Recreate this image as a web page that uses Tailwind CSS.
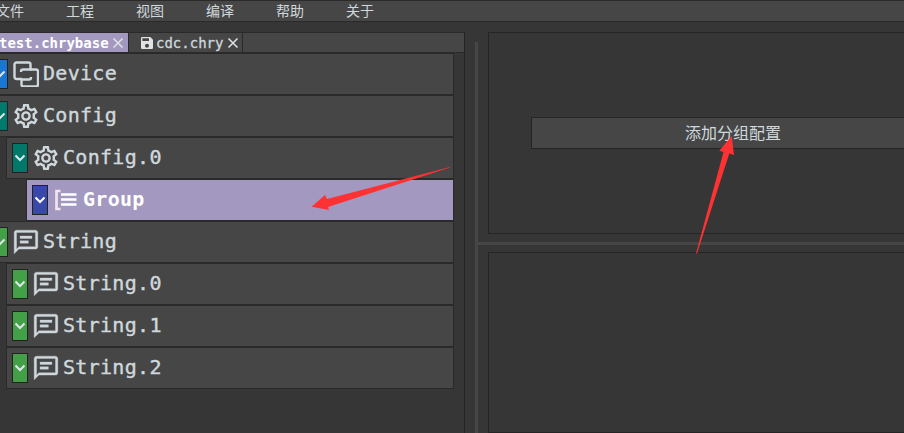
<!DOCTYPE html>
<html lang="zh-CN">
<head>
    <meta charset="UTF-8">
    <title>ChryUSB Configurator</title>
    <script src="https://cdn.jsdelivr.net/npm/@tailwindcss/browser@4"></script>
</head>
<body class="relative w-[904px] h-[433px] overflow-hidden bg-[#363636] text-[#cfd8dc] font-['Noto_Sans_CJK_SC','Liberation_Sans',sans-serif]">

    <!-- menu bar -->
    <nav class="h-[22px] flex items-center gap-[42px] pb-[2px] -ml-[2px] pl-0 bg-[#464646] border-y border-[#2a2a2a] text-[14px] leading-none w-[910px]">
        <span class="-ml-[2px]">文件</span>
        <span>工程</span>
        <span>视图</span>
        <span>编译</span>
        <span>帮助</span>
        <span>关于</span>
    </nav>

    <div class="flex pt-[10px] h-[411px]">
        <!-- left: tabs and tree -->
        <div class="w-[465px] h-full shrink-0 border-r border-[#252525] overflow-hidden">
            <div class="h-[21px] flex bg-[#464646] border-t border-b border-[#2a2a2a] font-['DejaVu_Sans_Mono',monospace] text-[14px] leading-none">
                <div class="w-[129px] shrink-0 flex items-center justify-between pr-[4px] bg-[#a399c0] border-r border-[#2a2a2a]">
                    <span class="-ml-[1px] font-bold text-white">test.chrybase</span>
                    <svg class="w-[12px] h-[12px]" viewBox="0 0 12 12" fill="none" stroke="#dfe3e6" stroke-width="1.5"><path d="M1.5 1.5l9 9M10.5 1.5l-9 9"/></svg>
                </div>
                <div class="w-[114px] shrink-0 flex items-center pl-[12px] gap-[3px] border-r border-[#2a2a2a]">
                    <svg class="w-[12px] h-[12px] shrink-0" viewBox="3 3 18 18" fill="#dfe3e6"><path d="M17 3H5c-1.1 0-2 .9-2 2v14c0 1.1.9 2 2 2h14c1.1 0 2-.9 2-2V7l-4-4zm-5 16c-1.66 0-3-1.34-3-3s1.34-3 3-3 3 1.34 3 3-1.34 3-3 3zm3-10H5V5h10v4z"/></svg>
                    <span class="[-webkit-text-stroke:0.3px_currentColor]">cdc.chry</span>
                    <svg class="w-[12px] h-[12px] ml-[1px]" viewBox="0 0 12 12" fill="none" stroke="#dfe3e6" stroke-width="1.5"><path d="M1.5 1.5l9 9M10.5 1.5l-9 9"/></svg>
                </div>
            </div>

            <div class="flex flex-col font-['DejaVu_Sans_Mono',monospace] text-[20px] leading-none tracking-[0.3px]">
                <!-- Device -->
                <div class="h-[42px] w-[468px] -ml-[14px] flex items-center pl-[5px] bg-[#464646] border border-[#2a2a2a]">
                    <span class="w-[16px] h-[30px] shrink-0 flex items-center justify-center bg-[#1976d2] border border-[#222]"><svg class="w-[12px] h-[8px]" viewBox="0 0 12 8" fill="none" stroke="#dfe6ea" stroke-width="2"><path d="M1.5 1.5L6 6l4.5-4.5"/></svg></span>
                    <svg class="ml-[5px] w-[26px] h-[26px] shrink-0" viewBox="0 0 26 26" fill="none" stroke="#cfd8dc" stroke-width="2.4"><path d="M9 18H3.500a2 2 0 0 1-2-2V3.500a2 2 0 0 1 2-2h12a2 2 0 0 1 2 2v5H10a2 2 0 0 0-2 2V11"/><path d="M17 8.500h6a2 2 0 0 1 2 2v13a2 2 0 0 1-2 2H10.500a2 2 0 0 1-2-2v-5H16a2 2 0 0 0 2-2V16"/></svg>
                    <span class="ml-[4px] -translate-y-px [-webkit-text-stroke:0.4px_currentColor]">Device</span>
                </div>
                <!-- Config -->
                <div class="h-[42px] w-[468px] -ml-[14px] flex items-center pl-[5px] bg-[#464646] border border-[#2a2a2a]">
                    <span class="w-[16px] h-[30px] shrink-0 flex items-center justify-center bg-[#00796b] border border-[#222]"><svg class="w-[12px] h-[8px]" viewBox="0 0 12 8" fill="none" stroke="#dfe6ea" stroke-width="2"><path d="M1.5 1.5L6 6l4.5-4.5"/></svg></span>
                    <svg class="ml-[6px] w-[24px] h-[24px] shrink-0" viewBox="2 2 20 20" fill="#cfd8dc"><path d="M19.43 12.98c.04-.32.07-.64.07-.98 0-.34-.03-.66-.07-.98l2.11-1.65c.19-.15.24-.42.12-.64l-2-3.46c-.09-.16-.26-.25-.44-.25-.06 0-.12.01-.17.03l-2.49 1c-.52-.4-1.08-.73-1.69-.98l-.38-2.65C14.46 2.18 14.25 2 14 2h-4c-.25 0-.46.18-.49.42l-.38 2.65c-.61.25-1.17.59-1.69.98l-2.49-1c-.06-.02-.12-.03-.18-.03-.17 0-.34.09-.43.25l-2 3.46c-.13.22-.07.49.12.64l2.11 1.65c-.04.32-.07.65-.07.98 0 .33.03.66.07.98l-2.11 1.65c-.19.15-.24.42-.12.64l2 3.46c.09.16.26.25.44.25.06 0 .12-.01.17-.03l2.49-1c.52.4 1.08.73 1.69.98l.38 2.65c.03.24.24.42.49.42h4c.25 0 .46-.18.49-.42l.38-2.65c.61-.25 1.17-.59 1.69-.98l2.49 1c.06.02.12.03.18.03.17 0 .34-.09.43-.25l2-3.46c.12-.22.07-.49-.12-.64l-2.11-1.65zm-1.98-1.71c.04.31.05.52.05.73 0 .21-.02.43-.05.73l-.14 1.13.89.7 1.08.84-.7 1.21-1.27-.51-1.04-.42-.9.68c-.43.32-.84.56-1.25.73l-1.06.43-.16 1.13-.2 1.35h-1.4l-.19-1.35-.16-1.13-1.06-.43c-.43-.18-.83-.41-1.23-.71l-.91-.7-1.06.43-1.27.51-.7-1.21 1.08-.84.89-.7-.14-1.13c-.03-.31-.05-.54-.05-.74s.02-.43.05-.73l.14-1.13-.89-.7-1.08-.84.7-1.21 1.27.51 1.04.42.9-.68c.43-.32.84-.56 1.25-.73l1.06-.43.16-1.13.2-1.35h1.39l.19 1.35.16 1.13 1.06.43c.43.18.83.41 1.23.71l.91.7 1.06-.43 1.27-.51.7 1.21-1.07.85-.89.7.14 1.13zM12 8c-2.21 0-4 1.790-4 4s1.790 4 4 4 4-1.790 4-4-1.790-4-4-4zm0 6c-1.100 0-2-.9-2-2s.9-2 2-2 2 .9 2 2-.9 2-2 2z"/></svg>
                    <span class="ml-[5px] -translate-y-px [-webkit-text-stroke:0.4px_currentColor]">Config</span>
                </div>
                <!-- Config.0 -->
                <div class="h-[42px] w-[448px] ml-[6px] flex items-center pl-[5px] bg-[#464646] border border-[#2a2a2a]">
                    <span class="w-[16px] h-[30px] shrink-0 flex items-center justify-center bg-[#00796b] border border-[#222]"><svg class="w-[12px] h-[8px]" viewBox="0 0 12 8" fill="none" stroke="#dfe6ea" stroke-width="2"><path d="M1.5 1.5L6 6l4.5-4.5"/></svg></span>
                    <svg class="ml-[6px] w-[24px] h-[24px] shrink-0" viewBox="2 2 20 20" fill="#cfd8dc"><path d="M19.43 12.98c.04-.32.07-.64.07-.98 0-.34-.03-.66-.07-.98l2.11-1.65c.19-.15.24-.42.12-.64l-2-3.46c-.09-.16-.26-.25-.44-.25-.06 0-.12.01-.17.03l-2.49 1c-.52-.4-1.08-.73-1.69-.98l-.38-2.65C14.46 2.18 14.25 2 14 2h-4c-.25 0-.46.18-.49.42l-.38 2.65c-.61.25-1.17.59-1.69.98l-2.49-1c-.06-.02-.12-.03-.18-.03-.17 0-.34.09-.43.25l-2 3.46c-.13.22-.07.49.12.64l2.11 1.65c-.04.32-.07.65-.07.98 0 .33.03.66.07.98l-2.11 1.65c-.19.15-.24.42-.12.64l2 3.46c.09.16.26.25.44.25.06 0 .12-.01.17-.03l2.49-1c.52.4 1.08.73 1.69.98l.38 2.65c.03.24.24.42.49.42h4c.25 0 .46-.18.49-.42l.38-2.65c.61-.25 1.17-.59 1.69-.98l2.49 1c.06.02.12.03.18.03.17 0 .34-.09.43-.25l2-3.46c.12-.22.07-.49-.12-.64l-2.11-1.65zm-1.98-1.71c.04.31.05.52.05.73 0 .21-.02.43-.05.73l-.14 1.13.89.7 1.08.84-.7 1.21-1.27-.51-1.04-.42-.9.68c-.43.32-.84.56-1.25.73l-1.06.43-.16 1.13-.2 1.35h-1.4l-.19-1.35-.16-1.13-1.06-.43c-.43-.18-.83-.41-1.23-.71l-.91-.7-1.06.43-1.27.51-.7-1.21 1.08-.84.89-.7-.14-1.13c-.03-.31-.05-.54-.05-.74s.02-.43.05-.73l.14-1.13-.89-.7-1.08-.84.7-1.21 1.27.51 1.04.42.9-.68c.43-.32.84-.56 1.25-.73l1.06-.43.16-1.13.2-1.35h1.39l.19 1.35.16 1.13 1.06.43c.43.18.83.41 1.23.71l.91.7 1.06-.43 1.27-.51.7 1.21-1.07.85-.89.7.14 1.13zM12 8c-2.21 0-4 1.790-4 4s1.790 4 4 4 4-1.790 4-4-1.790-4-4-4zm0 6c-1.100 0-2-.9-2-2s.9-2 2-2 2 .9 2 2-.9 2-2 2z"/></svg>
                    <span class="ml-[5px] -translate-y-px [-webkit-text-stroke:0.4px_currentColor]">Config.0</span>
                </div>
                <!-- Group (selected) -->
                <div class="h-[42px] w-[428px] ml-[26px] flex items-center pl-[5px] bg-[#a399c0] border border-[#2a2a2a] text-white font-bold">
                    <span class="w-[16px] h-[30px] shrink-0 flex items-center justify-center bg-[#3949ab] border border-[#222]"><svg class="w-[12px] h-[8px]" viewBox="0 0 12 8" fill="none" stroke="#ffffff" stroke-width="2"><path d="M1.5 1.5L6 6l4.500-4.500"/></svg></span>
                    <svg class="ml-[7px] w-[22px] h-[22px] shrink-0" viewBox="0 0 22 22" fill="none" stroke-width="2.700"><path d="M5.500 2H1.500v18h4" stroke="#f3e3f0"/><path d="M6 5.500h15.500M6 10.500h15.500M6 15.500h15.500" stroke="#ffffff"/></svg>
                    <span class="ml-[6px] -translate-y-px">Group</span>
                </div>
                <!-- String -->
                <div class="h-[42px] w-[468px] -ml-[14px] flex items-center pl-[5px] bg-[#464646] border border-[#2a2a2a]">
                    <span class="w-[16px] h-[30px] shrink-0 flex items-center justify-center bg-[#43a047] border border-[#222]"><svg class="w-[12px] h-[8px]" viewBox="0 0 12 8" fill="none" stroke="#dfe6ea" stroke-width="2"><path d="M1.5 1.5L6 6l4.5-4.5"/></svg></span>
                    <svg class="ml-[5px] w-[26px] h-[26px] shrink-0" viewBox="1 1 22 22" fill="#cfd8dc" stroke="#cfd8dc" stroke-width="0.3"><path d="M20 2H4c-1.100 0-2 .9-2 2v18l4-4h14c1.100 0 2-.9 2-2V4c0-1.100-.9-2-2-2zm0 14H6l-2 2V4h16v12z"/><path d="M7 7h10v2H7zM7 11h7v2H7z"/></svg>
                    <span class="ml-[4px] -translate-y-px [-webkit-text-stroke:0.4px_currentColor]">String</span>
                </div>
                <!-- String.0 -->
                <div class="h-[42px] w-[448px] ml-[6px] flex items-center pl-[5px] bg-[#464646] border border-[#2a2a2a]">
                    <span class="w-[16px] h-[30px] shrink-0 flex items-center justify-center bg-[#43a047] border border-[#222]"><svg class="w-[12px] h-[8px]" viewBox="0 0 12 8" fill="none" stroke="#dfe6ea" stroke-width="2"><path d="M1.5 1.5L6 6l4.5-4.5"/></svg></span>
                    <svg class="ml-[5px] w-[26px] h-[26px] shrink-0" viewBox="1 1 22 22" fill="#cfd8dc" stroke="#cfd8dc" stroke-width="0.3"><path d="M20 2H4c-1.100 0-2 .9-2 2v18l4-4h14c1.100 0 2-.9 2-2V4c0-1.100-.9-2-2-2zm0 14H6l-2 2V4h16v12z"/><path d="M7 7h10v2H7zM7 11h7v2H7z"/></svg>
                    <span class="ml-[4px] -translate-y-px [-webkit-text-stroke:0.4px_currentColor]">String.0</span>
                </div>
                <!-- String.1 -->
                <div class="h-[42px] w-[448px] ml-[6px] flex items-center pl-[5px] bg-[#464646] border border-[#2a2a2a]">
                    <span class="w-[16px] h-[30px] shrink-0 flex items-center justify-center bg-[#43a047] border border-[#222]"><svg class="w-[12px] h-[8px]" viewBox="0 0 12 8" fill="none" stroke="#dfe6ea" stroke-width="2"><path d="M1.5 1.5L6 6l4.5-4.5"/></svg></span>
                    <svg class="ml-[5px] w-[26px] h-[26px] shrink-0" viewBox="1 1 22 22" fill="#cfd8dc" stroke="#cfd8dc" stroke-width="0.3"><path d="M20 2H4c-1.100 0-2 .9-2 2v18l4-4h14c1.100 0 2-.9 2-2V4c0-1.100-.9-2-2-2zm0 14H6l-2 2V4h16v12z"/><path d="M7 7h10v2H7zM7 11h7v2H7z"/></svg>
                    <span class="ml-[4px] -translate-y-px [-webkit-text-stroke:0.4px_currentColor]">String.1</span>
                </div>
                <!-- String.2 -->
                <div class="h-[42px] w-[448px] ml-[6px] flex items-center pl-[5px] bg-[#464646] border border-[#2a2a2a]">
                    <span class="w-[16px] h-[30px] shrink-0 flex items-center justify-center bg-[#43a047] border border-[#222]"><svg class="w-[12px] h-[8px]" viewBox="0 0 12 8" fill="none" stroke="#dfe6ea" stroke-width="2"><path d="M1.5 1.5L6 6l4.5-4.5"/></svg></span>
                    <svg class="ml-[5px] w-[26px] h-[26px] shrink-0" viewBox="1 1 22 22" fill="#cfd8dc" stroke="#cfd8dc" stroke-width="0.3"><path d="M20 2H4c-1.100 0-2 .9-2 2v18l4-4h14c1.100 0 2-.9 2-2V4c0-1.100-.9-2-2-2zm0 14H6l-2 2V4h16v12z"/><path d="M7 7h10v2H7zM7 11h7v2H7z"/></svg>
                    <span class="ml-[4px] -translate-y-px [-webkit-text-stroke:0.4px_currentColor]">String.2</span>
                </div>
            </div>
        </div>

        <!-- vertical splitter -->
        <div class="w-[3px] shrink-0 ml-[10px] mt-[10px] bg-[#464646]"></div>

        <!-- right: two stacked panels -->
        <div class="flex-1 min-w-0 flex flex-col overflow-hidden">
            <div class="h-[202px] ml-[10px] w-[430px] border border-[#252525]">
                <button class="mt-[84px] ml-[42px] w-[404px] h-[32px] pb-[2px] bg-[#464646] border border-[#252525] text-[16px] leading-none text-center">添加分组配置</button>
            </div>
            <div class="h-[3px] mt-[8px] bg-[#464646] shrink-0"></div>
            <div class="flex-1 ml-[10px] w-[430px] mt-[7px] border border-[#252525]"></div>
        </div>
    </div>

    <!-- red annotation arrows -->
    <svg class="absolute left-0 top-0 pointer-events-none" width="904" height="433" viewBox="0 0 904 433" fill="#fe3232">
        <path d="M450 167L327 199 325 195 311.500 206.700 329 210 328 207 450 167.500Z"/>
        <path d="M696 253.500L723.500 152 719.300 150.700 731.700 136 734 155 729.300 153.500 697 253.500Z"/>
    </svg>
</body>
</html>
